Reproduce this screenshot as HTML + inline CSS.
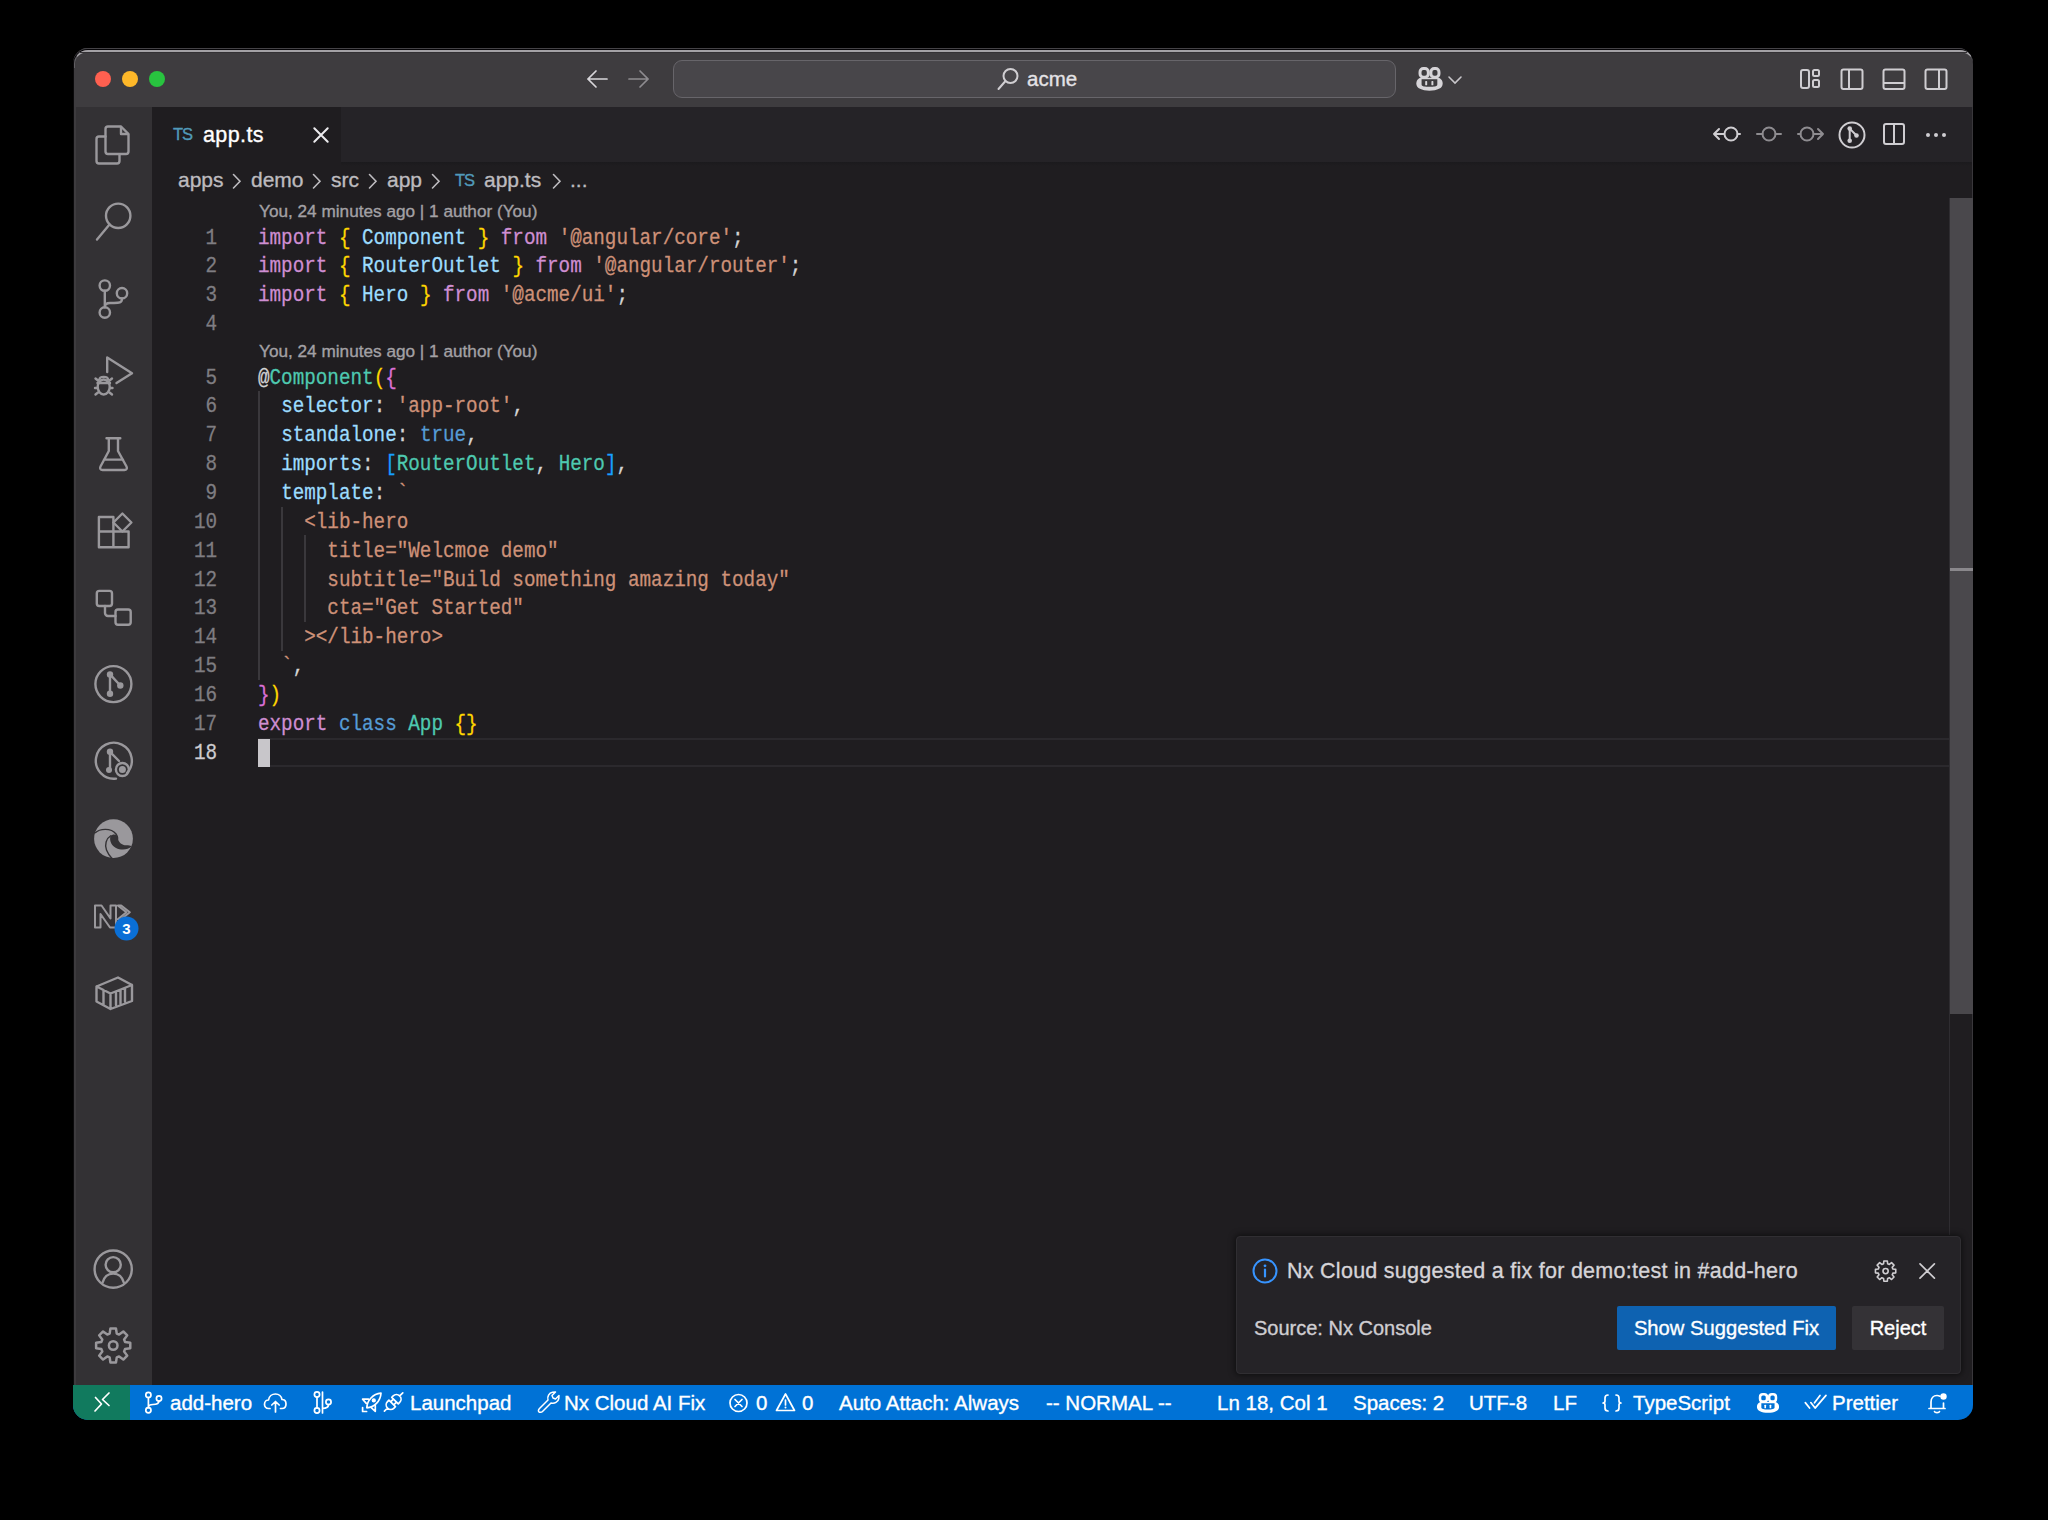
<!DOCTYPE html>
<html><head><meta charset="utf-8">
<style>
*{margin:0;padding:0;box-sizing:border-box}
html,body{width:2048px;height:1520px;background:#000;overflow:hidden;font-family:"Liberation Sans",sans-serif}
#w{position:absolute;left:0;top:0;width:2048px;height:1520px;clip-path:inset(48px 75px 100px 73px round 15px);background:#1f1d20}
#w div,#w svg{position:absolute}
#w span{position:static}
#w div{-webkit-text-stroke:0.35px currentColor}
#w .code,#w .ln{-webkit-text-stroke:0.25px currentColor}
.bg{display:block}
.code{left:258px;font-family:"Liberation Mono",monospace;font-size:19.28px;white-space:pre;color:#d4d4d4;height:28.85px;line-height:28.85px;transform:translateY(1.6px) scaleY(1.12);transform-origin:0 19.56px}
.ln{left:160px;width:57px;text-align:right;font-family:"Liberation Mono",monospace;font-size:19.28px;color:#7f7d82;height:28.85px;line-height:28.85px;transform:translateY(1.6px) scaleY(1.12);transform-origin:0 19.56px}
.ln.cur{color:#cfcdd1}
.lens{left:259px;font-size:17.2px;color:#a3a1a5;white-space:pre;height:24px;line-height:24px}
.k{color:#cf8ed2}.b1{color:#ffd700}.b2{color:#da70d6}.b3{color:#179fff}.v{color:#9cdcfe}.s{color:#ce9178}.t{color:#4ec9b0}.bl{color:#569cd6}
.sb{top:1385px;height:36px;line-height:36px;font-size:20.5px;color:#fff;white-space:pre}
.ic{fill:none;stroke:#9a989c;stroke-width:2;stroke-linecap:round;stroke-linejoin:round}
.wi{fill:none;stroke:#fff;stroke-width:1.6;stroke-linecap:round;stroke-linejoin:round}
.ti{fill:none;stroke:#cfcdd1;stroke-width:2;stroke-linecap:round;stroke-linejoin:round}
.bc{top:166px;height:28px;line-height:28px;font-size:21px;color:#bdbbbf;white-space:pre}
</style></head><body>
<div id="w">
<!-- title bar -->
<div style="left:73px;top:48px;width:1901px;height:59px;background:#3e3c3f"></div>
<div style="left:73px;top:48px;width:1901px;height:1px;background:#454347"></div>
<div style="left:73px;top:49px;width:1901px;height:30px;border-radius:15px 15px 0 0;border-top:1px solid #050407;border-left:1px solid #050407;border-right:1px solid #050407"></div>
<div style="left:73.5px;top:50px;width:1900px;height:18px;border-radius:14px 14px 0 0;border-top:2px solid #a3a1a5;border-left:1px solid rgba(163,161,165,.35);border-right:1px solid rgba(163,161,165,.35)"></div>
<div style="left:80px;top:52px;width:1887px;height:1px;background:#333134"></div>
<div style="left:95px;top:71px;width:16px;height:16px;border-radius:50%;background:#fe6050"></div>
<div style="left:122px;top:71px;width:16px;height:16px;border-radius:50%;background:#feb829"></div>
<div style="left:149px;top:71px;width:16px;height:16px;border-radius:50%;background:#28c33f"></div>
<svg style="left:583px;top:67px" width="28" height="24" viewBox="0 0 28 24"><path d="M24 12H5M13 4L5 12L13 20" fill="none" stroke="#d8d6da" stroke-width="1.7" stroke-linecap="round"/></svg>
<svg style="left:625px;top:67px" width="28" height="24" viewBox="0 0 28 24"><path d="M4 12H23M15 4L23 12L15 20" fill="none" stroke="#8e8c90" stroke-width="1.7" stroke-linecap="round"/></svg>
<div style="left:673px;top:60px;width:723px;height:38px;border-radius:9px;background:#48464a;border:1.5px solid #67656a"></div>
<svg style="left:995px;top:66px" width="26" height="26" viewBox="0 0 26 26"><circle cx="15.5" cy="10" r="7" fill="none" stroke="#d0ced2" stroke-width="2"/><path d="M10.5 15L3.5 23" stroke="#d0ced2" stroke-width="2" stroke-linecap="round"/></svg>
<div style="left:1027px;top:64px;height:30px;line-height:30px;font-size:20.5px;color:#e4e2e6">acme</div>
<!-- copilot icon title -->
<svg style="left:1416px;top:67px" width="27" height="24" viewBox="0 0 26.1 23"><defs><symbol id="cop" viewBox="0 0 26.1 23">
<path d="M0.3 16.2C0.3 12 3 10.3 5.5 10.3H20.6C23.1 10.3 25.8 12 25.8 16.2C25.8 20.6 20.5 22.8 13 22.8C5.6 22.8 0.3 20.6 0.3 16.2Z" fill="currentColor"/>
<rect x="3.9" y="1.45" width="8" height="8.3" rx="3.2" fill="none" stroke="currentColor" stroke-width="2.9"/>
<rect x="14.4" y="1.45" width="7.8" height="8.3" rx="3.2" fill="none" stroke="currentColor" stroke-width="2.9"/>
<path d="M5.4 11.8H20.6V16.8C20.6 18.6 17.5 19.1 13 19.1C8.5 19.1 5.4 18.6 5.4 16.8Z" fill="var(--bgc)"/>
<rect x="8.9" y="13.5" width="1.9" height="4.1" rx=".6" fill="currentColor"/>
<rect x="14.9" y="13.5" width="1.9" height="4.1" rx=".6" fill="currentColor"/>
</symbol></defs><use href="#cop" width="26.1" height="23" style="color:#d6d4d8;--bgc:#3d3b3e"/></svg>
<svg style="left:1447px;top:73.5px" width="16" height="12" viewBox="0 0 16 12"><path d="M2 3L8 9L14 3" fill="none" stroke="#c8c6ca" stroke-width="1.6" stroke-linecap="round"/></svg>
<!-- layout icons -->
<svg style="left:1797px;top:66px" width="28" height="26" viewBox="0 0 28 26"><rect x="4" y="4" width="8" height="18" rx="2" class="ti"/><rect x="16" y="4" width="6" height="6" rx="1.5" class="ti"/><rect x="16" y="14" width="6" height="7" rx="1.5" class="ti"/></svg>
<svg style="left:1838px;top:66px" width="28" height="26" viewBox="0 0 28 26"><rect x="3.5" y="3.5" width="21" height="19.5" rx="2" class="ti"/><path d="M11 4V23" class="ti"/></svg>
<svg style="left:1880px;top:66px" width="28" height="26" viewBox="0 0 28 26"><rect x="3.5" y="3.5" width="21" height="19.5" rx="2" class="ti"/><path d="M4 17H24" class="ti"/></svg>
<svg style="left:1922px;top:66px" width="28" height="26" viewBox="0 0 28 26"><rect x="3.5" y="3.5" width="21" height="19.5" rx="2" class="ti"/><path d="M17 4V23" class="ti"/></svg>

<!-- activity bar -->
<div style="left:73px;top:107px;width:79px;height:1278px;background:#333134"></div>
<div style="left:73px;top:53px;width:1px;height:1332px;background:#0b0a0c"></div>
<div style="left:74px;top:107px;width:2px;height:1278px;background:#3d3b3e"></div>
<!-- tab bar -->
<div style="left:152px;top:107px;width:1822px;height:55px;background:#252327"></div>
<div style="left:152px;top:107px;width:189px;height:55px;background:#1f1d20"></div>
<div style="left:173px;top:122px;height:24px;line-height:24px;font-size:16.5px;color:#519aba;letter-spacing:-1px">TS</div>
<div style="left:203px;top:120px;height:30px;line-height:30px;font-size:21.5px;letter-spacing:0.4px;color:#ffffff">app.ts</div>
<svg style="left:309px;top:123px" width="24" height="24" viewBox="0 0 24 24"><path d="M5.3 5.3L18.7 18.7M18.7 5.3L5.3 18.7" fill="none" stroke="#ecebee" stroke-width="2" stroke-linecap="round"/></svg>
<!-- editor actions -->
<svg style="left:1710px;top:120px" width="34" height="28" viewBox="0 0 34 28"><circle cx="21" cy="14" r="6.5" class="ti"/><path d="M14 14H4M9 9L4 14L9 19M27.5 14H30" class="ti"/></svg>
<svg style="left:1754px;top:120px" width="30" height="28" viewBox="0 0 30 28"><circle cx="15" cy="14" r="6.5" fill="none" stroke="#8e8c90" stroke-width="2"/><path d="M3 14H8.5M21.5 14H27" fill="none" stroke="#8e8c90" stroke-width="2" stroke-linecap="round"/></svg>
<svg style="left:1795px;top:120px" width="32" height="28" viewBox="0 0 32 28"><circle cx="12" cy="14" r="6.5" fill="none" stroke="#8e8c90" stroke-width="2"/><path d="M3 14H5.5M18.5 14H28M23 9L28 14L23 19" fill="none" stroke="#8e8c90" stroke-width="2" stroke-linecap="round" stroke-linejoin="round"/></svg>
<svg style="left:1837px;top:120px" width="30" height="30" viewBox="0 0 30 30"><circle cx="15" cy="15" r="12.5" class="ti"/><path d="M12.7 8.6V20.8M12.7 8.6L19.5 15.5" class="ti"/><circle cx="12.7" cy="8.6" r="2.3" fill="#cfcdd1"/><circle cx="12.7" cy="20.8" r="2.3" fill="#cfcdd1"/><circle cx="19.5" cy="15.5" r="2.3" fill="#cfcdd1"/></svg>
<svg style="left:1880px;top:120px" width="28" height="28" viewBox="0 0 28 28"><rect x="4" y="4" width="20" height="20" rx="2" class="ti"/><path d="M14 4.5V23.5" class="ti"/></svg>
<svg style="left:1922px;top:125px" width="28" height="20" viewBox="0 0 28 20"><circle cx="6" cy="10" r="2" fill="#cfcdd1"/><circle cx="14" cy="10" r="2" fill="#cfcdd1"/><circle cx="22" cy="10" r="2" fill="#cfcdd1"/></svg>

<div style="left:341px;top:162px;width:1633px;height:4px;background:linear-gradient(#1b1a1d,#1f1d20)"></div>
<!-- breadcrumb -->
<div class="bc" style="left:178px">apps</div>
<svg style="left:230px;top:170px" width="14" height="22" viewBox="0 0 14 22"><path d="M3.5 4.5L10 11.25L3.5 18" fill="none" stroke="#bdbbbf" stroke-width="1.6" stroke-linecap="round"/></svg>
<div class="bc" style="left:251px">demo</div>
<svg style="left:310px;top:170px" width="14" height="22" viewBox="0 0 14 22"><path d="M3.5 4.5L10 11.25L3.5 18" fill="none" stroke="#bdbbbf" stroke-width="1.6" stroke-linecap="round"/></svg>
<div class="bc" style="left:331px">src</div>
<svg style="left:366px;top:170px" width="14" height="22" viewBox="0 0 14 22"><path d="M3.5 4.5L10 11.25L3.5 18" fill="none" stroke="#bdbbbf" stroke-width="1.6" stroke-linecap="round"/></svg>
<div class="bc" style="left:387px">app</div>
<svg style="left:429px;top:170px" width="14" height="22" viewBox="0 0 14 22"><path d="M3.5 4.5L10 11.25L3.5 18" fill="none" stroke="#bdbbbf" stroke-width="1.6" stroke-linecap="round"/></svg>
<div style="left:455px;top:168px;height:24px;line-height:24px;font-size:16.5px;color:#519aba;letter-spacing:-1px">TS</div>
<div class="bc" style="left:484px">app.ts</div>
<svg style="left:550px;top:170px" width="14" height="22" viewBox="0 0 14 22"><path d="M3.5 4.5L10 11.25L3.5 18" fill="none" stroke="#bdbbbf" stroke-width="1.6" stroke-linecap="round"/></svg>
<div class="bc" style="left:570px">...</div>

<!-- current line highlight -->
<div style="left:258px;top:738px;width:1691px;height:29px;border-top:2px solid #2b292d;border-bottom:2px solid #2b292d"></div>
<!-- indent guides -->
<div style="left:258px;top:391px;width:2px;height:289px;background:#3a383c"></div>
<div style="left:281px;top:507px;width:2px;height:144px;background:#3a383c"></div>
<div style="left:304px;top:535px;width:2px;height:87px;background:#3a383c"></div>
<!-- cursor -->
<div style="left:258px;top:739px;width:12px;height:28px;background:#c8c6ca"></div>

<!-- codelens -->
<div class="lens" style="left:259px;top:199px">You, 24 minutes ago | 1 author (You)</div>
<div class="lens" style="left:259px;top:339px">You, 24 minutes ago | 1 author (You)</div>

<div style="left:1972px;top:107px;width:1px;height:1278px;background:#39373b"></div>
<!-- scrollbar -->
<div style="left:1949px;top:198px;width:1px;height:1037px;background:#2f2d31"></div>
<div style="left:1950px;top:198px;width:23px;height:816px;background:#4a484c"></div>
<div style="left:1950px;top:568px;width:23px;height:3px;background:#8a888c"></div>
<div class="ln" style="top:222.60px">1</div><div class="code" style="top:222.60px"><span class="k">import</span> <span class="b1">{</span> <span class="v">Component</span> <span class="b1">}</span> <span class="k">from</span> <span class="s">'@angular/core'</span>;</div>
<div class="ln" style="top:251.45px">2</div><div class="code" style="top:251.45px"><span class="k">import</span> <span class="b1">{</span> <span class="v">RouterOutlet</span> <span class="b1">}</span> <span class="k">from</span> <span class="s">'@angular/router'</span>;</div>
<div class="ln" style="top:280.30px">3</div><div class="code" style="top:280.30px"><span class="k">import</span> <span class="b1">{</span> <span class="v">Hero</span> <span class="b1">}</span> <span class="k">from</span> <span class="s">'@acme/ui'</span>;</div>
<div class="ln" style="top:309.15px">4</div><div class="code" style="top:309.15px"></div>
<div class="ln" style="top:362.60px">5</div><div class="code" style="top:362.60px">@<span class="t">Component</span><span class="b1">(</span><span class="b2">{</span></div>
<div class="ln" style="top:391.45px">6</div><div class="code" style="top:391.45px">  <span class="v">selector</span>: <span class="s">'app-root'</span>,</div>
<div class="ln" style="top:420.30px">7</div><div class="code" style="top:420.30px">  <span class="v">standalone</span>: <span class="bl">true</span>,</div>
<div class="ln" style="top:449.15px">8</div><div class="code" style="top:449.15px">  <span class="v">imports</span>: <span class="b3">[</span><span class="t">RouterOutlet</span>, <span class="t">Hero</span><span class="b3">]</span>,</div>
<div class="ln" style="top:478.00px">9</div><div class="code" style="top:478.00px">  <span class="v">template</span>: <span class="s">`</span></div>
<div class="ln" style="top:506.85px">10</div><div class="code" style="top:506.85px"><span class="s">    &lt;lib-hero</span></div>
<div class="ln" style="top:535.70px">11</div><div class="code" style="top:535.70px"><span class="s">      title="Welcmoe demo"</span></div>
<div class="ln" style="top:564.55px">12</div><div class="code" style="top:564.55px"><span class="s">      subtitle="Build something amazing today"</span></div>
<div class="ln" style="top:593.40px">13</div><div class="code" style="top:593.40px"><span class="s">      cta="Get Started"</span></div>
<div class="ln" style="top:622.25px">14</div><div class="code" style="top:622.25px"><span class="s">    &gt;&lt;/lib-hero&gt;</span></div>
<div class="ln" style="top:651.10px">15</div><div class="code" style="top:651.10px"><span class="s">  `</span>,</div>
<div class="ln" style="top:679.95px">16</div><div class="code" style="top:679.95px"><span class="b2">}</span><span class="b1">)</span></div>
<div class="ln" style="top:708.80px">17</div><div class="code" style="top:708.80px"><span class="k">export</span> <span class="bl">class</span> <span class="t">App</span> <span class="b1">{}</span></div>
<div class="ln cur" style="top:737.65px">18</div><div class="code" style="top:737.65px"></div><svg style="left:73px;top:107px" width="79" height="1278" viewBox="73 107 79 1278">
<g fill="none" stroke="#9a989c" stroke-width="2.4" stroke-linecap="round" stroke-linejoin="round">
 <!-- files -->
 <path d="M105.5 136.5H99a2.5 2.5 0 0 0-2.5 2.5V161a2.5 2.5 0 0 0 2.5 2.5H117a2.5 2.5 0 0 0 2.5-2.5V155"/>
 <path d="M108 126.5H121L128.5 134V151.5a2.5 2.5 0 0 1-2.5 2.5H108a2.5 2.5 0 0 1-2.5-2.5V129a2.5 2.5 0 0 1 2.5-2.5Z"/>
 <path d="M121 127V134H128"/>
 <!-- search -->
 <circle cx="118.2" cy="215.8" r="12.2"/>
 <path d="M109.5 224.5L97 239.5"/>
 <!-- scm -->
 <circle cx="104.8" cy="285.6" r="5.2"/>
 <circle cx="122" cy="293.2" r="5.2"/>
 <circle cx="104.8" cy="312.5" r="5.2"/>
 <path d="M104.8 290.8V307.3M122 298.4C122 303 119 303 114 303H110C106 303 104.8 305 104.8 307"/>
 <!-- run debug -->
 <path d="M107.2 372V357.5L132 373.3L116.5 383"/>
 <ellipse cx="103.7" cy="387" rx="6" ry="7.5"/>
 <path d="M97.5 383H110M95.5 378.5L98 380.5M112 378.5L109.5 380.5M95 388H97.3M110.2 388H112.5M95.5 394.5L98 392.5M112 394.5L109.5 392.5M99.5 379.5C99.5 376 108 376 108 379.5"/>
 <!-- testing -->
 <path d="M106.5 438.2H120.3M108.8 438.5V451L100.5 466.5C99.5 468.5 100.5 470 102.5 470H124.5C126.5 470 127.5 468.5 126.5 466.5L118 451V438.5M104 459.6H123"/>
 <!-- extensions -->
 <path d="M98.9 517H113.4V547.3H98.9ZM98.9 531.5H128.6V547.3H113.4M128.6 531.5V547.3"/>
 <path d="M122.4 513.5L131.4 522.5L122.4 531.5L113.4 522.5Z"/>
 <!-- remote explorer -->
 <rect x="96.8" y="590.9" width="15.2" height="15.1" rx="2.5"/>
 <rect x="115.5" y="609.5" width="15.2" height="15.2" rx="2.5"/>
 <path d="M105 606V613a3 3 0 0 0 3 3H115.5"/>
 <!-- gitlens -->
 <circle cx="113.4" cy="684.1" r="18"/>
 <path d="M110 674.4V693.8M110 674.4L120.3 685.5"/>
 <!-- gitlens inspect -->
 <path d="M127 773A18 18 0 1 0 116 778.6"/>
 <path d="M110 751.8V770.4M110 751.8L119 761"/>
 <circle cx="122.4" cy="769.5" r="6.5"/>
 <!-- nx -->
 <path d="M95 905.5H101.5L110.5 918.5V905.5H116V927.5H110L100.5 914V927.5H95Z" stroke-width="2"/>
 <path d="M117.8 905.5H121.2L129.8 912.3L121.2 919.2H117.8L126.4 912.3Z" stroke-width="2"/>
 <!-- docker -->
 <path d="M96.5 986.5L118 977.5L132 985V1001L110.5 1009L96.5 1001.5Z M96.5 986.5L110.5 993.5L132 985M110.5 993.5V1009M103.5 990V1005M116 992V1005M120.5 990V1003.5M125 988.5V1001.5"/>
 <!-- account -->
 <circle cx="113.2" cy="1269.1" r="18.6"/>
 <circle cx="113.2" cy="1264.7" r="7.6"/>
 <path d="M102.5 1282.8C104 1277 108 1273.6 113.2 1273.6C118.4 1273.6 122.4 1277 123.9 1282.8"/>
</g>
<g fill="#9a989c">
 <circle cx="110" cy="674.4" r="3.2"/><circle cx="120.3" cy="685.5" r="3.2"/><circle cx="110" cy="693.8" r="3.2"/>
 <circle cx="110" cy="751.8" r="3.2"/><circle cx="109" cy="770" r="3"/>
 <circle cx="122.4" cy="769.5" r="3.5"/>
</g>
<!-- edge -->
<circle cx="113.5" cy="838.7" r="19.4" fill="#9a989c"/>
<path d="M95 833C99.5 828.5 111 827.5 116 834C118 837 118 840 116.5 842" fill="none" stroke="#343235" stroke-width="1.4"/>
<path d="M110.5 836C113 833.5 117 834 117.7 838C118.3 842 121.5 845.3 126.5 845.3C128.5 845.3 130.5 845.5 131.5 846.5C128 850 121 850.5 116 848C112 846 109 841 110.5 836Z" fill="#343235"/>
<path d="M111 835.5C106 838.5 104.5 845 106.5 850C107.8 853.2 109.5 856 112 858.5" fill="none" stroke="#343235" stroke-width="1.4"/>
<!-- gear -->
<path fill="none" stroke="#9a989c" stroke-width="2.5" stroke-linejoin="round" d="M109.65 1333.62 L110.44 1328.42 L115.96 1328.42 L116.75 1333.62 L119.09 1334.59 L123.33 1331.47 L127.23 1335.37 L124.11 1339.61 L125.08 1341.95 L130.28 1342.74 L130.28 1348.26 L125.08 1349.05 L124.11 1351.39 L127.23 1355.63 L123.33 1359.53 L119.09 1356.41 L116.75 1357.38 L115.96 1362.58 L110.44 1362.58 L109.65 1357.38 L107.31 1356.41 L103.07 1359.53 L99.17 1355.63 L102.29 1351.39 L101.32 1349.05 L96.12 1348.26 L96.12 1342.74 L101.32 1341.95 L102.29 1339.61 L99.17 1335.37 L103.07 1331.47 L107.31 1334.59Z"/>
<circle cx="113.2" cy="1345.5" r="4.3" fill="none" stroke="#9a989c" stroke-width="2.5"/>
<!-- badge -->
<circle cx="126.5" cy="928.5" r="12" fill="#0a6fd6"/>
<text x="126.5" y="934" font-family="Liberation Sans" font-weight="bold" font-size="15" fill="#fff" text-anchor="middle">3</text>
</svg>
<!-- status bar -->
<div style="left:73px;top:1385px;width:1901px;height:36px;background:#0072d6"></div>
<div style="left:73px;top:1385px;width:57px;height:36px;background:#117a5e"></div>
<svg style="left:73px;top:1385px" width="1901" height="36" viewBox="73 1385 1901 36">
<g fill="none" stroke="#fff" stroke-width="1.7" stroke-linecap="round" stroke-linejoin="round">
 <!-- remote -->
 <path d="M95.5 1397.5L101.5 1404L95 1411M109 1393L102.5 1399.5L109 1405.5"/>
 <!-- branch -->
 <circle cx="148.4" cy="1394.9" r="2.6"/><circle cx="159" cy="1398.5" r="2.6"/><circle cx="148.4" cy="1410.2" r="2.6"/>
 <path d="M148.4 1397.5V1407.6M159 1401.1C159 1404 156 1404.5 153 1404.5C150 1404.5 148.4 1405.5 148.4 1407.5"/>
 <!-- cloud upload -->
 <path d="M270 1408.5H268.5C266 1408.5 264.5 1406.5 264.5 1404.2C264.5 1401.8 266.5 1400 268.5 1400C269 1396.5 272 1394 275.5 1394C279 1394 281.5 1396.5 282 1399.5C284.5 1399.5 286 1401.5 286 1404C286 1406.5 284.5 1408.5 282 1408.5H280.5M275.5 1412V1401.5M271.8 1405L275.5 1401.5L279.2 1405"/>
 <!-- git compare -->
 <circle cx="317" cy="1394.5" r="2.6"/><circle cx="317" cy="1410.5" r="2.6"/><circle cx="328.5" cy="1402" r="2.6"/>
 <path d="M317 1397V1408M322.5 1392V1413M328.5 1404.6C328.5 1407 326 1408.5 322.5 1408.5"/>
 <!-- rocket -->
 <path d="M366.8 1407.8C367 1400.5 373 1393.8 381 1393.2C380.5 1401.2 374.2 1407.5 366.8 1407.8Z"/>
 <path d="M368.5 1399.2H362.6L366.3 1403.4M375.3 1405.4V1411.3L371.2 1407.6M362.6 1407.6V1411.5H366.6"/>
 <circle cx="373.8" cy="1400.4" r="1.3" fill="#fff"/>
 <!-- plug -->
 <g transform="translate(393.6 1402) rotate(-45)">
  <path d="M-13 0H-8.5M-2 -4.6H-4A4.6 4.6 0 0 0 -4 4.6H-2ZM-2 -2.2H1.2M-2 2.2H1.2M2 -4.6H4A4.6 4.6 0 0 1 4 4.6H2ZM8.6 0H13"/>
 </g>
 <!-- wrench -->
 <path d="M539.5 1408.5L548 1400C547 1396.5 549 1392.8 552.5 1392.2L555.5 1392L552 1395.5L553 1398L555.5 1399L559 1395.5L558.8 1398.5C558.2 1402 554.5 1404 551 1403L542.5 1411.5C541.5 1412.5 539.5 1412.5 538.8 1411.7C538 1411 538.5 1409.5 539.5 1408.5Z" stroke-width="1.5"/>
 <!-- error -->
 <circle cx="738.5" cy="1403" r="8.5"/>
 <path d="M735 1399.5L742 1406.5M742 1399.5L735 1406.5"/>
 <!-- warning -->
 <path d="M785.5 1394L794.5 1410.5H776.5Z"/>
 <path d="M785.5 1400V1405"/>
 <!-- braces -->
 <path d="M1608 1395C1605.5 1395 1605 1396 1605 1398V1401C1605 1402.5 1604 1403 1603 1403C1604 1403 1605 1403.5 1605 1405V1408C1605 1410 1605.5 1411 1608 1411M1616 1395C1618.5 1395 1619 1396 1619 1398V1401C1619 1402.5 1620 1403 1621 1403C1620 1403 1619 1403.5 1619 1405V1408C1619 1410 1618.5 1411 1616 1411"/>
 <!-- prettier check -->
 <path d="M1805.3 1402.6L1809.6 1408M1810.8 1402.6L1815.1 1408.1L1826 1395.4M1814.5 1402.8L1820 1395.4"/>
 <!-- bell -->
 <path d="M1931 1408.5V1402C1931 1398 1933.5 1395.5 1937 1395.5C1938 1395.5 1939 1395.7 1940 1396.2M1943.5 1403V1408.5M1929 1408.5H1945M1934.5 1411.5C1935 1413 1939 1413 1939.5 1411.5"/>
</g>
<circle cx="785.5" cy="1407.5" r="1" fill="#fff"/>
<circle cx="1943.5" cy="1396.5" r="3.2" fill="#fff"/>
</svg><svg style="left:1756px;top:1393px" width="24" height="20" viewBox="0 0 26.1 23"><use href="#cop" width="26.1" height="23" style="color:#fff;--bgc:#0072d6"/></svg>
<div class="sb" style="left:170px">add-hero</div>
<div class="sb" style="left:410px">Launchpad</div>
<div class="sb" style="left:564px">Nx Cloud AI Fix</div>
<div class="sb" style="left:756px">0</div>
<div class="sb" style="left:802px">0</div>
<div class="sb" style="left:839px">Auto Attach: Always</div>
<div class="sb" style="left:1046px">-- NORMAL --</div>
<div class="sb" style="left:1217px">Ln 18, Col 1</div>
<div class="sb" style="left:1353px">Spaces: 2</div>
<div class="sb" style="left:1469px">UTF-8</div>
<div class="sb" style="left:1553px">LF</div>
<div class="sb" style="left:1633px">TypeScript</div>
<div class="sb" style="left:1832px">Prettier</div>

<!-- notification -->
<div style="left:1236px;top:1236px;width:725px;height:138px;background:#252327;border:1px solid #302e32;border-radius:4px;box-shadow:0 0 6px 1px rgba(0,0,0,.55)"></div>
<svg style="left:1250px;top:1256px" width="30" height="30" viewBox="0 0 30 30"><circle cx="15" cy="15" r="11.5" fill="none" stroke="#3794ff" stroke-width="2"/><path d="M15 13.5V20.5" stroke="#3794ff" stroke-width="2.2" stroke-linecap="round"/><circle cx="15" cy="9.8" r="1.4" fill="#3794ff"/></svg>
<div style="left:1287px;top:1256px;height:30px;line-height:30px;font-size:21.5px;letter-spacing:0.27px;color:#d6d4d8;white-space:pre">Nx Cloud suggested a fix for demo:test in #add-hero</div>
<svg style="left:1860px;top:1250px" width="90" height="44" viewBox="1860 1250 90 44"><path fill="none" stroke="#cfcdd1" stroke-width="1.6" stroke-linejoin="round" d="M1883.57 1263.78 L1883.86 1260.95 L1887.34 1260.95 L1887.63 1263.78 L1889.35 1264.49 L1891.55 1262.69 L1894.01 1265.15 L1892.21 1267.35 L1892.92 1269.07 L1895.75 1269.36 L1895.75 1272.84 L1892.92 1273.13 L1892.21 1274.85 L1894.01 1277.05 L1891.55 1279.51 L1889.35 1277.71 L1887.63 1278.42 L1887.34 1281.25 L1883.86 1281.25 L1883.57 1278.42 L1881.85 1277.71 L1879.65 1279.51 L1877.19 1277.05 L1878.99 1274.85 L1878.28 1273.13 L1875.45 1272.84 L1875.45 1269.36 L1878.28 1269.07 L1878.99 1267.35 L1877.19 1265.15 L1879.65 1262.69 L1881.85 1264.49Z"/><circle cx="1885.6" cy="1271.1" r="2.6" fill="none" stroke="#cfcdd1" stroke-width="1.6"/><path d="M1920 1263.8L1934.4 1278.2M1934.4 1263.8L1920 1278.2" fill="none" stroke="#cfcdd1" stroke-width="1.7" stroke-linecap="round"/></svg>
<div style="left:1254px;top:1313px;height:30px;line-height:30px;font-size:20px;color:#cfcdd1;white-space:pre">Source: Nx Console</div>
<div style="left:1617px;top:1306px;width:219px;height:44px;background:#0e62b1;border-radius:2px;color:#fff;font-size:20.2px;line-height:44px;text-align:center">Show Suggested Fix</div>
<div style="left:1852px;top:1306px;width:92px;height:44px;background:#343236;border-radius:2px;color:#fff;font-size:20px;line-height:44px;text-align:center">Reject</div>
</div>
</body></html>
